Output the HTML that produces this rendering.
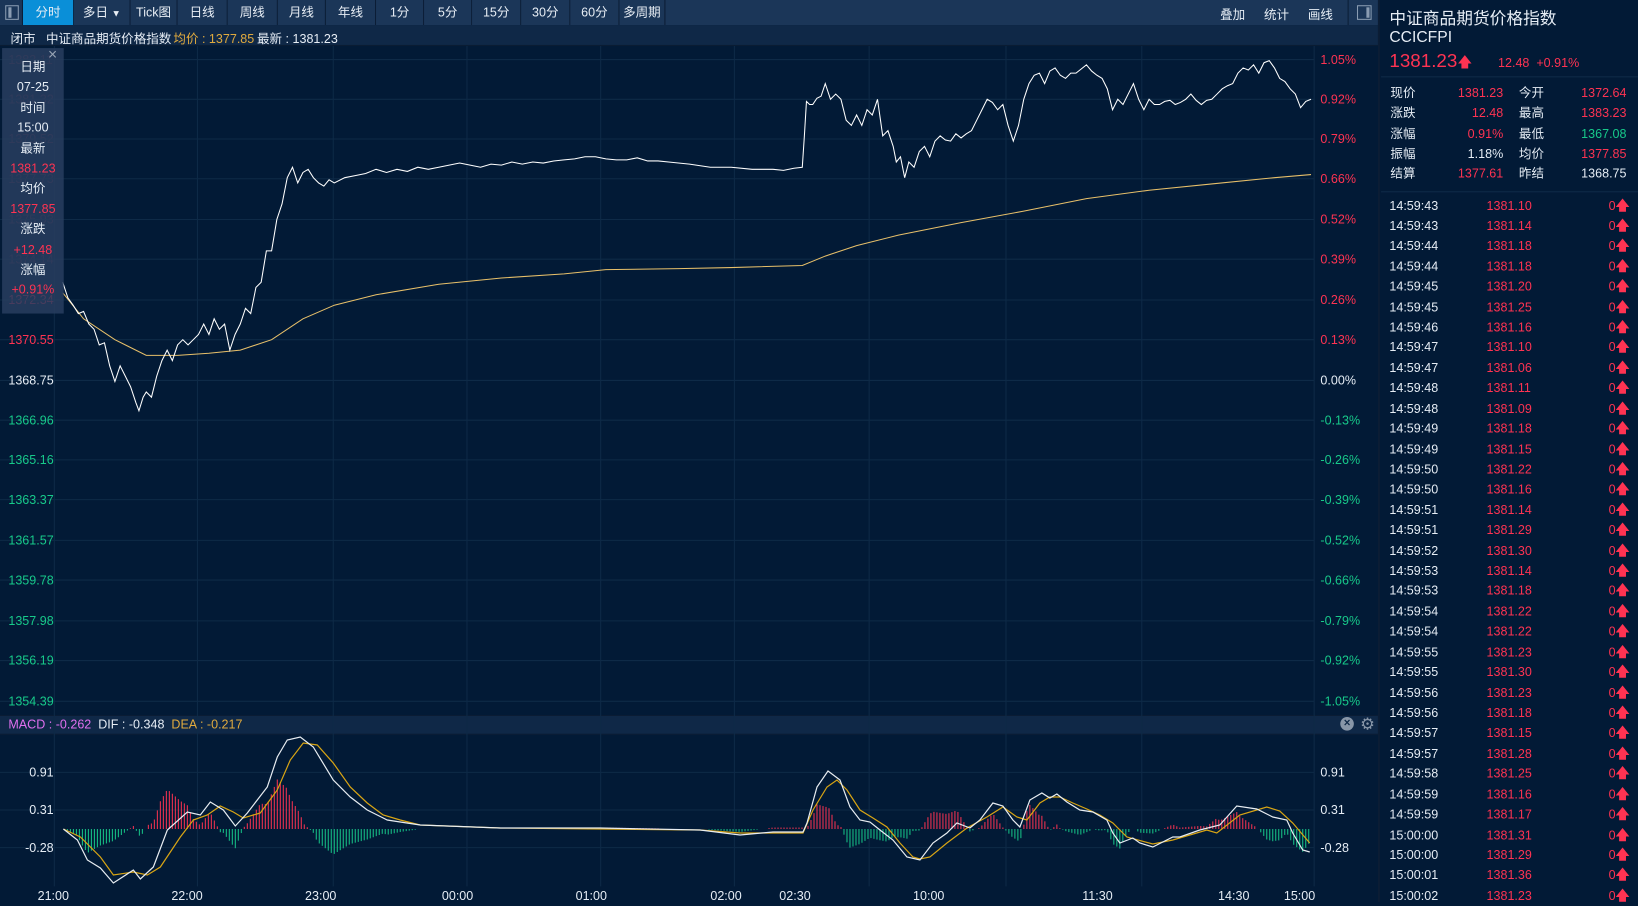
<!DOCTYPE html>
<html><head><meta charset="utf-8"><style>
*{margin:0;padding:0;box-sizing:border-box}
html,body{width:1638px;height:902px;overflow:hidden;background:#021a36;font-family:"Liberation Sans","Noto Sans CJK SC",sans-serif;}
#w{position:absolute;left:0;top:0;width:1568px;height:863px;transform:scale(1.04464,1.04519);transform-origin:0 0;background:#021a36;color:#e6edf5;font-size:12px}
.a{position:absolute;white-space:nowrap}
.tb{position:absolute;top:0;height:24px;background:#1b3658;border-right:1px solid #0b1d35;text-align:center;line-height:24px;font-size:12px;color:#e8eef5}
.r{color:#ff3352}.g{color:#17c98a}.y{color:#e0aa3e}
.ll{position:absolute;left:8px;font-size:12px;line-height:14px}
.rl{position:absolute;left:1264px;font-size:12px;line-height:14px}
.tk{position:absolute;left:1330px;width:230px;height:20px;font-size:12px;line-height:20px}
</style></head><body><div id="w">
<div class="a" style="left:0;top:0;width:1320px;height:24px;background:#1b3658"></div>
<div class="tb" style="left:0;width:22px"><div style="position:absolute;left:5px;top:5px;width:13px;height:14px;border:1px solid #8a9cb2"><div style="position:absolute;left:2px;top:1px;width:3px;height:10px;background:#8a9cb2"></div></div></div>
<div class="tb" style="left:22px;width:49px;background:#0a8fd8">分时</div>
<div class="tb" style="left:71px;width:54px">多日 <span style="font-size:9px">▼</span></div>
<div class="tb" style="left:125px;width:45px">Tick图</div>
<div class="tb" style="left:170px;width:48px">日线</div>
<div class="tb" style="left:218px;width:48px">周线</div>
<div class="tb" style="left:266px;width:46px">月线</div>
<div class="tb" style="left:312px;width:48px">年线</div>
<div class="tb" style="left:360px;width:46px">1分</div>
<div class="tb" style="left:406px;width:46px">5分</div>
<div class="tb" style="left:452px;width:47px">15分</div>
<div class="tb" style="left:499px;width:47px">30分</div>
<div class="tb" style="left:546px;width:47px">60分</div>
<div class="tb" style="left:593px;width:44px">多周期</div>
<div class="a" style="left:1168px;top:5px">叠加</div>
<div class="a" style="left:1210px;top:5px">统计</div>
<div class="a" style="left:1252px;top:5px">画线</div>
<div class="a" style="left:1290px;top:0;width:30px;height:24px;border-left:1px solid #0b1d35"><div style="position:absolute;left:8px;top:5px;width:14px;height:14px;border:1px solid #8a9cb2"><div style="position:absolute;right:1px;top:1px;width:3px;height:10px;background:#8a9cb2"></div></div></div>
<div class="a" style="left:0;top:24px;width:1320px;height:20px;background:#0f2847;border-bottom:1px solid #0a1c33"></div>
<div class="a" style="left:10px;top:28px">闭市</div>
<div class="a" style="left:44px;top:28px">中证商品期货价格指数</div>
<div class="a y" style="left:166px;top:28px">均价 : 1377.85</div>
<div class="a" style="left:246px;top:28px">最新 : 1381.23</div>
<div class="a" style="left:0;top:684px;width:1320px;height:19px;background:#0f2847;border-top:1px solid #0a1c33;border-bottom:1px solid #0a1c33"></div>
<div class="a" style="left:8px;top:686px"><span style="color:#e070f0">MACD : -0.262</span> &nbsp;<span>DIF : -0.348</span> &nbsp;<span class="y">DEA : -0.217</span></div>
<div class="a" style="left:1283px;top:686px;width:13px;height:13px;border-radius:50%;background:#8896a8;color:#0f2847;font-size:11px;line-height:13px;text-align:center;font-weight:bold">×</div>
<div class="a" style="left:1302px;top:683px;font-size:16px;color:#8896a8">⚙</div>
<!-- faint labels behind tooltip -->
<div class="ll r" style="top:50px;opacity:.35">1383.11</div>
<div class="ll r" style="top:88px;opacity:.35">1381.32</div>
<div class="ll r" style="top:126px;opacity:.35">1379.52</div>
<div class="ll r" style="top:164px;opacity:.35">1377.73</div>
<div class="ll r" style="top:203px;opacity:.35">1375.93</div>
<div class="ll r" style="top:241px;opacity:.35">1374.14</div>
<div class="ll r" style="top:280px">1372.34</div>
<svg class="a" style="left:0;top:0" width="1568" height="863" viewBox="0 0 1568 863">
<g stroke="#0e2a47" stroke-width="1">
<line x1="0" y1="57" x2="1258" y2="57"/><line x1="0" y1="95" x2="1258" y2="95"/><line x1="0" y1="133" x2="1258" y2="133"/><line x1="0" y1="171" x2="1258" y2="171"/><line x1="0" y1="210" x2="1258" y2="210"/><line x1="0" y1="248" x2="1258" y2="248"/><line x1="0" y1="287" x2="1258" y2="287"/><line x1="0" y1="325" x2="1258" y2="325"/><line x1="0" y1="364" x2="1258" y2="364"/><line x1="0" y1="402" x2="1258" y2="402"/><line x1="0" y1="440" x2="1258" y2="440"/><line x1="0" y1="478" x2="1258" y2="478"/><line x1="0" y1="517" x2="1258" y2="517"/><line x1="0" y1="555" x2="1258" y2="555"/><line x1="0" y1="594" x2="1258" y2="594"/><line x1="0" y1="632" x2="1258" y2="632"/><line x1="0" y1="671" x2="1258" y2="671"/>
<line x1="0" y1="739" x2="1258" y2="739"/><line x1="0" y1="775" x2="1258" y2="775"/><line x1="0" y1="811" x2="1258" y2="811"/>
<line x1="52" y1="44" x2="52" y2="848"/><line x1="189" y1="44" x2="189" y2="848"/><line x1="319" y1="44" x2="319" y2="848"/><line x1="447" y1="44" x2="447" y2="848"/><line x1="575" y1="44" x2="575" y2="848"/><line x1="703" y1="44" x2="703" y2="848"/><line x1="832" y1="44" x2="832" y2="848"/><line x1="963" y1="44" x2="963" y2="848"/><line x1="1093" y1="44" x2="1093" y2="848"/><line x1="1258" y1="44" x2="1258" y2="848"/>
</g>
<line x1="1320" y1="0" x2="1320" y2="863" stroke="#0b1d35" stroke-width="2"/>
<polyline fill="none" stroke="#e8c06a" stroke-width="1" points="60,280 80,305 110,325 140,340 170,340 200,338 230,335 260,325 290,305 320,292 360,282 420,272 480,266 540,262 580,258 650,257 700,256 768,254 790,245 820,235 860,225 920,213 980,202 1040,190 1100,182 1160,176 1220,170 1255,167"/>
<polyline fill="none" stroke="#ffffff" stroke-width="1" points="60,270 65,285 70,292 75,300 80,298 85,310 90,315 95,330 100,328 105,350 110,365 115,350 120,360 125,370 130,385 133,393 137,380 140,375 145,380 150,360 155,345 160,335 165,345 170,330 175,325 180,330 185,325 190,320 195,310 200,320 205,305 210,315 215,310 220,335 225,320 230,310 235,295 240,300 245,275 250,270 255,240 260,240 265,210 270,195 275,170 280,160 285,175 290,165 295,162 300,170 305,175 310,178 315,172 320,175 330,170 340,168 350,166 360,162 370,165 380,162 390,164 400,160 410,162 420,160 430,158 440,156 450,158 460,160 470,157 480,158 490,155 500,157 510,155 520,156 530,154 540,153 550,152 560,150 570,150 580,152 590,153 600,153 610,151 620,154 630,154 640,155 660,157 680,160 700,160 720,162 740,162 750,163 760,161 768,160 770,130 772,97 775,100 778,100 782,94 786,92 790,80 795,95 800,90 805,95 810,115 815,120 820,110 825,120 830,105 835,110 840,95 845,130 850,125 855,140 858,155 862,150 866,170 870,155 875,160 880,145 885,140 890,150 895,135 900,130 905,134 910,135 915,128 920,132 925,128 930,125 935,115 940,105 945,95 950,98 955,105 960,100 965,120 970,135 975,120 980,95 985,80 990,72 995,70 1000,80 1005,68 1010,65 1015,72 1020,75 1025,70 1030,70 1035,66 1040,62 1045,68 1050,72 1055,75 1060,85 1065,105 1070,95 1075,100 1080,90 1085,80 1090,95 1095,105 1100,95 1105,100 1110,100 1115,97 1120,96 1125,100 1130,98 1135,95 1140,90 1145,96 1150,100 1155,96 1160,95 1165,90 1170,85 1175,82 1180,80 1185,70 1190,65 1195,67 1200,62 1205,70 1210,60 1215,58 1220,65 1225,75 1230,78 1235,85 1240,90 1245,103 1250,97 1255,95"/>
<svg x="0" y="0" width="1568" height="863" viewBox="0 0 1638 902" id="macd"></svg>
</svg>
<div class="a" style="left:2px;top:46px;width:59px;height:254px;background:rgba(40,62,95,0.85)"></div>
<div class="a" style="left:46px;top:44px;color:#9aa6b6;font-size:15px">×</div>
<div class="a" style="left:2px;top:55px;width:59px;text-align:center;line-height:19.4px;font-size:12px">日期<br>07-25<br>时间<br>15:00<br>最新<br><span class="r">1381.23</span><br>均价<br><span class="r">1377.85</span><br>涨跌<br><span class="r">+12.48</span><br>涨幅<br><span class="r">+0.91%</span></div>
<div class="ll r" style="top:318px">1370.55</div>
<div class="ll" style="top:357px">1368.75</div>
<div class="ll g" style="top:395px">1366.96</div>
<div class="ll g" style="top:433px">1365.16</div>
<div class="ll g" style="top:471px">1363.37</div>
<div class="ll g" style="top:510px">1361.57</div>
<div class="ll g" style="top:548px">1359.78</div>
<div class="ll g" style="top:587px">1357.98</div>
<div class="ll g" style="top:625px">1356.19</div>
<div class="ll g" style="top:664px">1354.39</div>
<div class="rl r" style="top:50px">1.05%</div>
<div class="rl r" style="top:88px">0.92%</div>
<div class="rl r" style="top:126px">0.79%</div>
<div class="rl r" style="top:164px">0.66%</div>
<div class="rl r" style="top:203px">0.52%</div>
<div class="rl r" style="top:241px">0.39%</div>
<div class="rl r" style="top:280px">0.26%</div>
<div class="rl r" style="top:318px">0.13%</div>
<div class="rl" style="top:357px">0.00%</div>
<div class="rl g" style="top:395px">-0.13%</div>
<div class="rl g" style="top:433px">-0.26%</div>
<div class="rl g" style="top:471px">-0.39%</div>
<div class="rl g" style="top:510px">-0.52%</div>
<div class="rl g" style="top:548px">-0.66%</div>
<div class="rl g" style="top:587px">-0.79%</div>
<div class="rl g" style="top:625px">-0.92%</div>
<div class="rl g" style="top:664px">-1.05%</div>
<div class="ll" style="left:28px;top:732px">0.91</div>
<div class="ll" style="left:28px;top:768px">0.31</div>
<div class="ll" style="left:24px;top:804px">-0.28</div>
<div class="rl" style="top:732px">0.91</div>
<div class="rl" style="top:768px">0.31</div>
<div class="rl" style="top:804px">-0.28</div>
<div class="a" style="left:36px;top:850px">21:00</div>
<div class="a" style="left:164px;top:850px">22:00</div>
<div class="a" style="left:292px;top:850px">23:00</div>
<div class="a" style="left:423px;top:850px">00:00</div>
<div class="a" style="left:551px;top:850px">01:00</div>
<div class="a" style="left:680px;top:850px">02:00</div>
<div class="a" style="left:746px;top:850px">02:30</div>
<div class="a" style="left:874px;top:850px">10:00</div>
<div class="a" style="left:1036px;top:850px">11:30</div>
<div class="a" style="left:1166px;top:850px">14:30</div>
<div class="a" style="left:1229px;top:850px">15:00</div>
<div class="a" style="left:1330px;top:4px;font-size:16px">中证商品期货价格指数</div>
<div class="a" style="left:1330px;top:27px;font-size:15px">CCICFPI</div>
<div class="a r" style="left:1330px;top:48px;font-size:18px">1381.23<span style="font-size:14px">🡅</span></div>
<div class="a r" style="left:1434px;top:53px;font-size:12px">12.48 &nbsp;+0.91%</div>
<div class="a" style="left:1322px;top:73px;width:246px;height:1px;background:#0f2a48"></div>
<div class="a" style="left:1331px;top:80px;line-height:19.3px">现价<br>涨跌<br>涨幅<br>振幅<br>结算</div>
<div class="a r" style="left:1380px;top:80px;width:59px;text-align:right;line-height:19.3px">1381.23<br>12.48<br>0.91%<br><span style="color:#e6edf5">1.18%</span><br>1377.61</div>
<div class="a" style="left:1454px;top:80px;line-height:19.3px">今开<br>最高<br>最低<br>均价<br>昨结</div>
<div class="a r" style="left:1500px;top:80px;width:57px;text-align:right;line-height:19.3px">1372.64<br>1383.23<br><span class="g">1367.08</span><br>1377.85<br><span style="color:#e6edf5">1368.75</span></div>
<div class="a" style="left:1322px;top:183px;width:246px;height:1px;background:#0f2a48"></div>
<div id="ticks"></div>
</div>
<script>
var t=[["14:59:43","1381.10"],["14:59:43","1381.14"],["14:59:44","1381.18"],["14:59:44","1381.18"],["14:59:45","1381.20"],["14:59:45","1381.25"],["14:59:46","1381.16"],["14:59:47","1381.10"],["14:59:47","1381.06"],["14:59:48","1381.11"],["14:59:48","1381.09"],["14:59:49","1381.18"],["14:59:49","1381.15"],["14:59:50","1381.22"],["14:59:50","1381.16"],["14:59:51","1381.14"],["14:59:51","1381.29"],["14:59:52","1381.30"],["14:59:53","1381.14"],["14:59:53","1381.18"],["14:59:54","1381.22"],["14:59:54","1381.22"],["14:59:55","1381.23"],["14:59:55","1381.30"],["14:59:56","1381.23"],["14:59:56","1381.18"],["14:59:57","1381.15"],["14:59:57","1381.28"],["14:59:58","1381.25"],["14:59:59","1381.16"],["14:59:59","1381.17"],["15:00:00","1381.31"],["15:00:00","1381.29"],["15:00:01","1381.36"],["15:00:02","1381.23"]];
var h="";for(var i=0;i<35;i++){var y=186.5+i*19.42;h+='<div class="tk" style="top:'+y+'px"><span>'+t[i][0]+'</span><span class="r" style="position:absolute;left:93px">'+t[i][1]+'</span><span class="r" style="position:absolute;right:0">0<b style="font-size:13px">🡅</b></span></div>';}
document.getElementById('ticks').innerHTML=h;
var dif=[[63,829],[77,840],[87,860],[100,868],[113,883],[133,870],[140,879],[153,867],[167,830],[187,812],[200,815],[210,802],[223,810],[235,826],[247,813],[267,787],[277,757],[287,740],[300,737],[313,747],[333,780],[350,797],[367,810],[387,820],[400,822],[420,825],[500,828],[600,828],[700,830],[740,835],[773,832],[803,832],[807,823],[817,787],[828,771],[840,780],[850,807],[860,820],[870,822],[880,830],[893,840],[907,857],[920,860],[933,843],[947,833],[957,823],[970,828],[980,820],[993,803],[1003,806],[1013,820],[1020,827],[1030,800],[1042,793],[1050,798],[1057,794],[1067,802],[1080,810],[1093,812],[1107,820],[1113,833],[1120,843],[1133,838],[1140,843],[1153,847],[1173,837],[1180,837],[1200,830],[1220,825],[1237,806],[1257,809],[1273,817],[1287,820],[1293,833],[1303,850],[1310,852]];
var dea=[[63,829],[80,837],[100,857],[113,875],[133,872],[147,875],[160,867],[180,837],[193,820],[207,815],[220,806],[233,812],[243,818],[260,813],[277,790],[290,760],[303,743],[317,745],[333,763],[350,787],[367,803],[383,815],[400,820],[420,825],[500,828],[600,829],[700,830],[740,833],[803,833],[813,810],[827,787],[837,780],[847,790],[860,810],[873,818],[887,827],[900,843],[913,857],[920,859],[930,857],[947,843],[967,828],[987,817],[1003,807],[1017,817],[1027,820],[1040,803],[1050,797],[1060,797],[1073,803],[1087,809],[1100,815],[1113,823],[1127,837],[1153,844],[1173,840],[1207,830],[1217,833],[1240,815],[1267,807],[1280,811],[1293,823],[1310,843]];
function ip(a,x){for(var i=1;i<a.length;i++){if(a[i][0]>=x){var p=a[i-1],q=a[i];var f=(x-p[0])/((q[0]-p[0])||1);return p[1]+f*(q[1]-p[1]);}}return a[a.length-1][1];}
var s="";var z=829;
for(var x=64;x<1310;x+=3){var v=1.5*(ip(dea,x)-ip(dif,x));if(Math.abs(v)<0.6)continue;s+='<line x1="'+x+'" y1="'+z+'" x2="'+x+'" y2="'+(z-v)+'" stroke="'+(v>0?'#ff3352':'#17c98a')+'"/>';}
function pl(a,c){return '<polyline fill="none" stroke="'+c+'" stroke-width="1.2" points="'+a.map(function(p){return p.join(",")}).join(" ")+'"/>';}
s+=pl(dea,"#d9a514")+pl(dif,"#e8edf2");
document.getElementById('macd').innerHTML=s;
</script>
</body></html>
